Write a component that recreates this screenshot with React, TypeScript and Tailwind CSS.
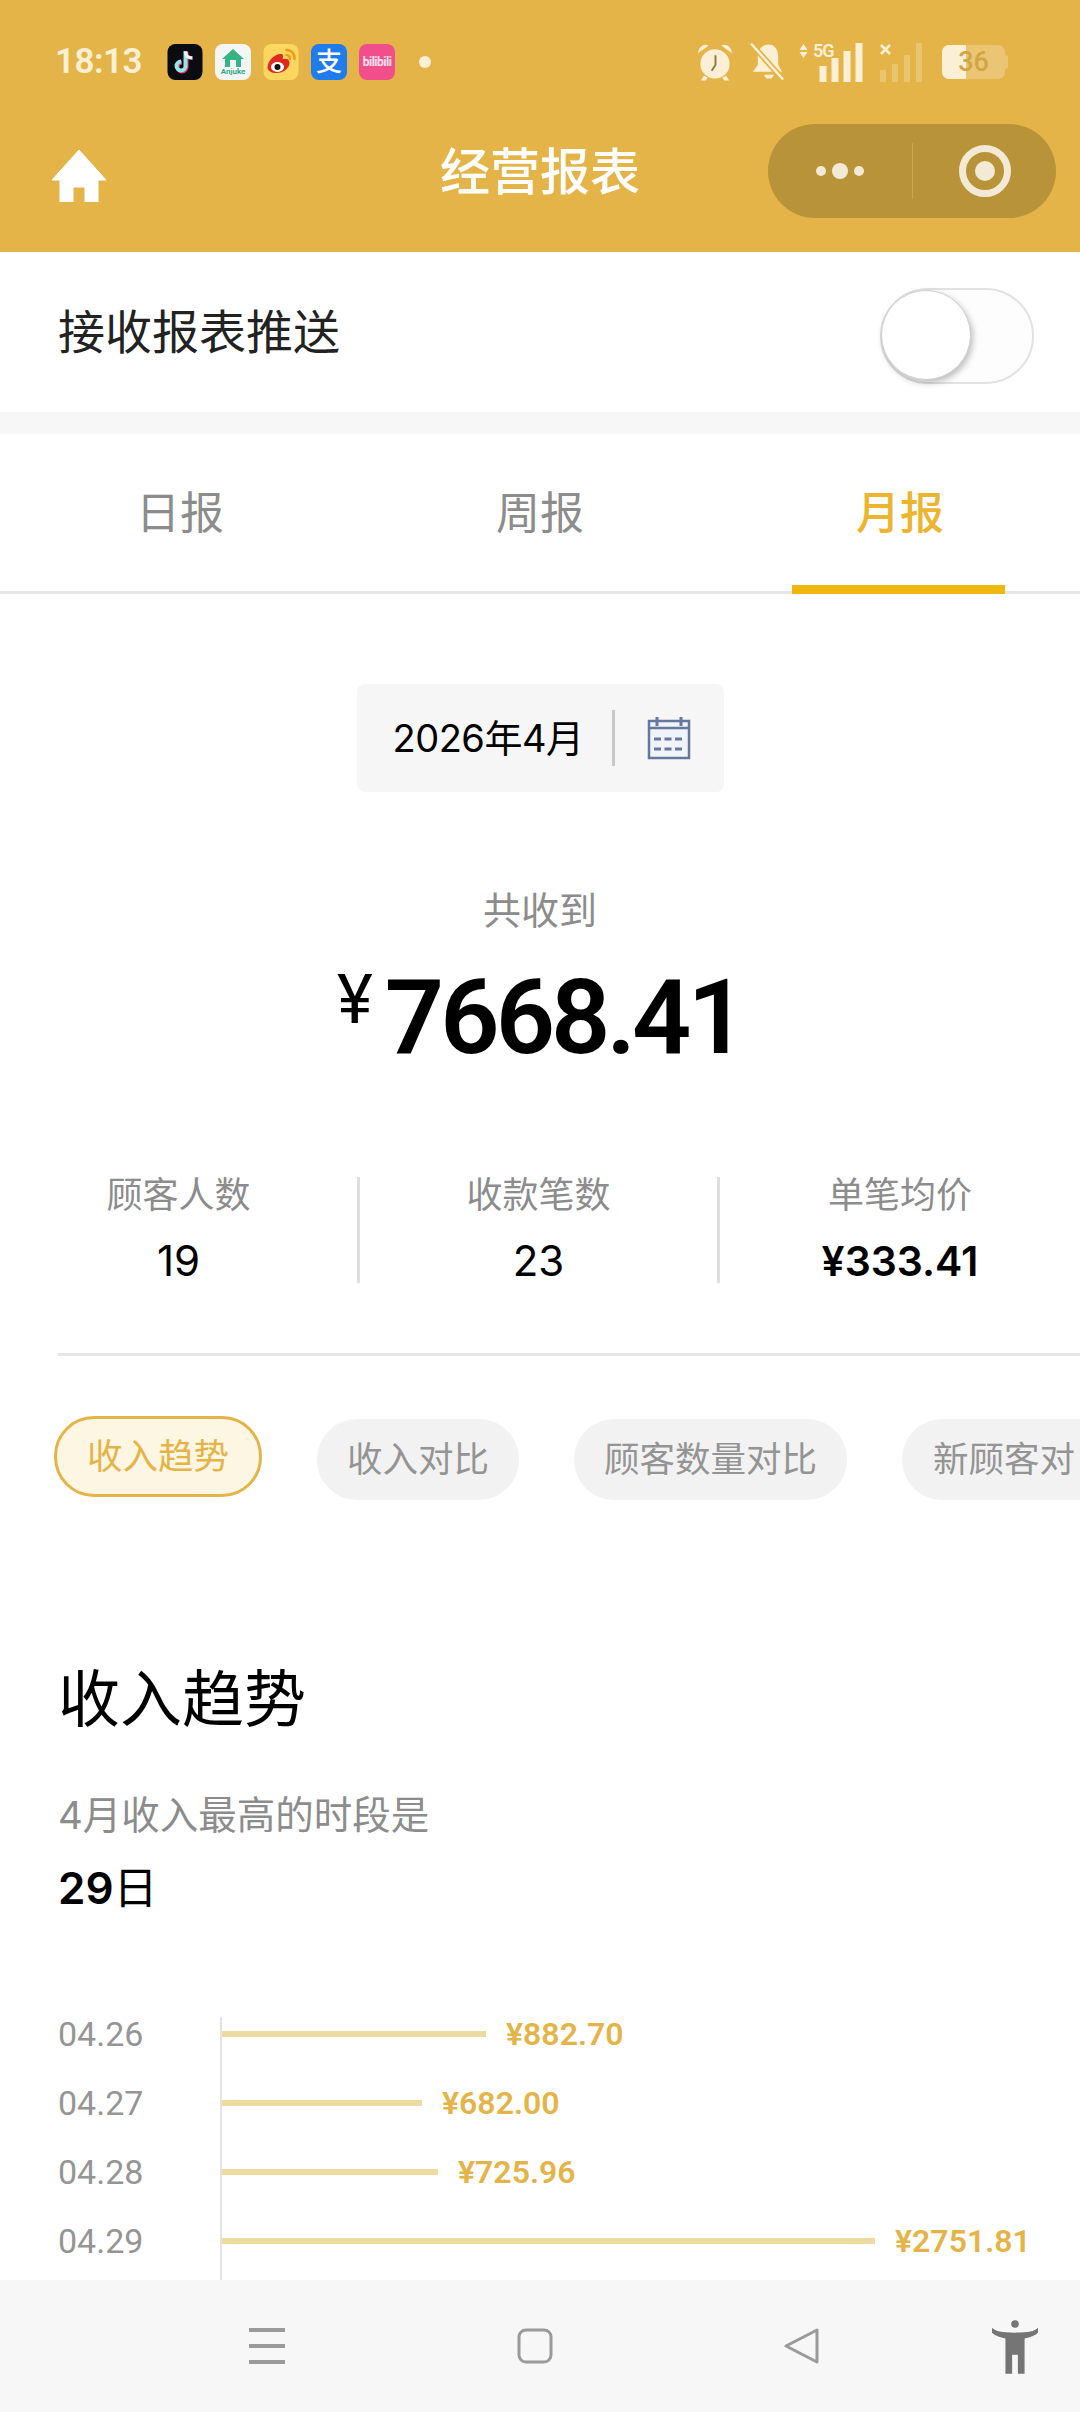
import React from 'react';

const cjk = '"Inter", "Noto Sans CJK SC", sans-serif';
const roboto = 'Roboto, "Noto Sans CJK SC", sans-serif';

function AppIcons() {
  return (
    <div className="flex items-center gap-[12px] ml-[25px]">
      <svg width="36" height="36" viewBox="0 0 35 36">
        <rect width="35" height="36" rx="8" fill="#0b0b12" />
        <path d="M19 8v15a4.5 4.5 0 1 1-4.5-4.5" fill="none" stroke="#ff2f5f" strokeWidth="4" />
        <path d="M18 7v15a4.5 4.5 0 1 1-4.5-4.5" fill="none" stroke="#8fe8ee" strokeWidth="4" />
        <path d="M18 8c0 4 3 6 7 6" fill="none" stroke="#f3f3f3" strokeWidth="3.5" />
      </svg>
      <div className="w-[36px] h-[36px] rounded-[8px] bg-[#f4f6f5] flex flex-col items-center pt-[5px]">
        <svg width="22" height="18" viewBox="0 0 22 18">
          <path d="M11 0 22 10h-3v8H3v-8H0z" fill="#35b583" />
          <path d="M8 11h6v7H8z" fill="#f4f6f5" />
        </svg>
        <span className="text-[8px] leading-[10px] font-semibold text-[#2aa678]" style={{ fontFamily: roboto }}>Anjuke</span>
      </div>
      <svg width="36" height="36" viewBox="0 0 35 36">
        <rect width="35" height="36" rx="8" fill="#fbd75f" />
        <path d="M4 23c0-6 7-13 13-13 3 0 3 2 2 5 4-1 7 0 7 4 0 5-6 10-13 10-5 0-9-2-9-6z" fill="#de2a1f" />
        <ellipse cx="14" cy="23" rx="6.5" ry="5" fill="#fff" />
        <circle cx="14" cy="23" r="3" fill="#111" />
        <path d="M23 6a8 8 0 0 1 8 9M23 11a3.500 3.500 0 0 1 3.500 4" fill="none" stroke="#ef9a1a" strokeWidth="2.500" strokeLinecap="round" />
      </svg>
      <div className="w-[36px] h-[36px] rounded-[8px] bg-[#1f7ced] flex items-center justify-center text-white text-[26px] leading-none font-medium">支</div>
      <div className="w-[36px] h-[36px] rounded-[8px] bg-[#f04f8b] flex items-center justify-center text-[#ffe3ee] text-[12px] font-bold tracking-[-0.5px]" style={{ fontFamily: roboto }}>bilibili</div>
      <div className="w-[12px] h-[12px] rounded-full bg-[#fbf0d6] ml-[12px]" />
    </div>
  );
}

function StatusIcons() {
  return (
    <div className="flex items-center text-[#fbf0d6]">
      <svg width="37" height="40" viewBox="0 0 38 40" fill="#fbf0d6">
        <circle cx="18.500" cy="22" r="15" />
        <path d="M1 11C2 4 7 1 12 3zM36 11C35 4 30 1 25 3z" />
        <path d="M7 34l-3 5h5l2-3zM30 34l3 5h-5l-2-3z" />
        <path d="M19 13v10l-4 6" fill="none" stroke="#8f7a3e" strokeWidth="2" />
      </svg>
      <svg className="ml-[16px]" width="35" height="40" viewBox="0 0 36 40" fill="#fbf0d6">
        <path d="M19 2c6 0 10 5 10 12v9l4 7H3l5-7v-9c0-7 5-12 11-12z" />
        <path d="M14 33h11l-3 4h-5z" />
        <path d="M1 1l33 37" stroke="#e4b448" strokeWidth="6" />
        <path d="M1 1l33 37" stroke="#fbf0d6" strokeWidth="2.500" />
      </svg>
      <div className="relative w-[67px] h-[40px] ml-[13px]">
        <svg width="67" height="40" viewBox="0 0 66 40" fill="#fbf0d6">
          <path d="M5 2 9 8H1zM5 16 1 10h8z" />
          <rect x="21" y="24" width="7" height="16" />
          <rect x="33" y="16" width="7" height="24" />
          <rect x="45" y="9" width="7" height="31" />
          <rect x="57" y="1" width="7" height="39" />
        </svg>
        <span className="absolute left-[15px] -top-[1px] text-[18px] leading-[20px] font-semibold tracking-[-1px]" style={{ fontFamily: roboto }}>5G</span>
      </div>
      <div className="relative w-[46px] h-[40px] ml-[14px]">
        <svg width="46" height="40" viewBox="0 0 46 40" fill="#fbf0d6" fillOpacity="0.28">
          <rect x="1" y="28" width="6" height="12" />
          <rect x="13" y="22" width="6" height="18" />
          <rect x="25" y="13" width="6" height="27" />
          <rect x="37" y="1" width="6" height="39" />
          <path d="M2 3l9 9M11 3l-9 9" stroke="#fbf0d6" strokeOpacity="1" strokeWidth="2.500" />
        </svg>
      </div>
      <div className="relative ml-[17px] w-[63px] h-[34px] rounded-[7px] bg-[#fbf0d6]/30 overflow-hidden">
        <div className="w-[24px] h-full bg-[#fbf0d6]" />
        <span className="absolute inset-0 flex items-center justify-center text-[#d2a544] text-[27px] font-medium" style={{ fontFamily: roboto }}>36</span>
      </div>
      <div className="w-[3px] h-[14px] bg-[#fbf0d6]/30 rounded-r-sm" />
    </div>
  );
}

function Header() {
  return (
    <header className="h-[252px] bg-[#e4b448] shrink-0">
      <div className="flex items-center justify-between h-[124px] pl-[55px] pr-[72px]">
        <div className="flex items-center">
          <span className="text-[35px] font-semibold text-[#fbf0d6] tracking-[-0.5px]" style={{ fontFamily: roboto }}>18:13</span>
          <AppIcons />
        </div>
        <StatusIcons />
      </div>
      <div className="relative flex items-center justify-center h-[94px]">
        <svg className="absolute left-[52px] top-[26px]" width="54" height="52" viewBox="0 0 54 52" fill="#fff">
          <path d="M27 0 54 30H46V52H33V37H21V52H8V30H0z" strokeLinejoin="round" stroke="#fff" strokeWidth="1" />
        </svg>
        <h1 className="text-[50px] font-medium text-white leading-none pt-[2px]">经营报表</h1>
        <div className="absolute right-[24px] top-0 w-[288px] h-[94px] rounded-full bg-[#b99339] flex items-center">
          <div className="w-[144px] flex items-center justify-center gap-[6px]">
            <div className="w-[10px] h-[10px] rounded-full bg-[#f3ead5]" />
            <div className="w-[16px] h-[16px] rounded-full bg-[#f3ead5]" />
            <div className="w-[10px] h-[10px] rounded-full bg-[#f3ead5]" />
          </div>
          <div className="w-px h-[56px] bg-[#c9a654]" />
          <div className="flex-1 flex items-center pl-[46px]">
            <div className="w-[52px] h-[52px] rounded-full border-[7px] border-[#f3ead5] flex items-center justify-center">
              <div className="w-[20px] h-[20px] rounded-full bg-[#f3ead5]" />
            </div>
          </div>
        </div>
      </div>
    </header>
  );
}

function Toggle() {
  return (
    <div className="relative w-[154px] h-[96px] mt-[8px] rounded-full border-2 border-[#e2e2e2] bg-[#fdfdfd]">
      <div className="absolute -left-[1px] top-0 w-[90px] h-[90px] rounded-full bg-white border border-[#d0d0d0] shadow-[2px_3px_6px_rgba(0,0,0,0.25)]" />
    </div>
  );
}

function Tabs() {
  return (
    <div className="grid grid-cols-3 h-[160px] mt-[22px] bg-white border-b-[3px] border-[#e6e6e6] text-[44px]">
      <div className="flex items-center justify-center text-[#8c8c8c]">日报</div>
      <div className="flex items-center justify-center text-[#8c8c8c]">周报</div>
      <div className="relative flex items-center justify-center text-[#ecb52f] font-medium">
        月报
        <div className="absolute left-[72px] -bottom-[3px] w-[213px] h-[9px] bg-[#efb810]" />
      </div>
    </div>
  );
}

function DateBox() {
  return (
    <div className="w-[367px] h-[108px] mx-auto mt-[90px] rounded-[8px] bg-[#f6f6f7] flex items-center pl-[36px]">
      <span className="text-[38px] text-black tracking-[-0.5px] w-[219px]">2026年4月</span>
      <div className="w-[3px] h-[56px] bg-[#c8c8c8]" />
      <svg className="ml-[32px]" width="44" height="44" viewBox="0 0 44 44" fill="none" stroke="#66779c">
        <rect x="2" y="5" width="40" height="37" fill="#f0f3fa" strokeWidth="2.500" />
        <path d="M2 12h40" strokeWidth="2.500" />
        <path d="M10 1v9M34 1v9" strokeWidth="3" />
        <path d="M7 23h30M7 33h30" strokeWidth="3" strokeDasharray="7 3.500" />
      </svg>
    </div>
  );
}

function Total() {
  return (
    <div className="text-center">
      <div className="mt-[91px] text-[38px] leading-[54px] text-[#8c8c8c]">共收到</div>
      <div className="mt-[26px] flex justify-center items-start h-[110px]" style={{ fontFamily: roboto }}>
        <span className="text-[68px] leading-[68px] text-black mt-[3px] mr-[12px]">¥</span>
        <span className="text-[104px] leading-[110px] font-semibold text-black tracking-[-4px]">7668.41</span>
      </div>
    </div>
  );
}

function Stat({ label, value, bold, last }: { label: string; value: string; bold?: boolean; last?: boolean }) {
  return (
    <div className={last ? 'h-[106px] text-center' : 'h-[106px] text-center border-r-[3px] border-[#dedede]'}>
      <div className="-mt-[6px] text-[36px] leading-[48px] text-[#8c8c8c]">{label}</div>
      <div className={bold ? 'mt-[18px] text-[41px] leading-[48px] font-semibold text-black' : 'mt-[18px] text-[42px] leading-[48px] text-black'}>{value}</div>
    </div>
  );
}

function Chip({ label, active, cut }: { label: string; active?: boolean; cut?: boolean }) {
  if (active) {
    return <div className="shrink-0 h-[81px] w-[208px] -mt-[3px] rounded-[40px] border-[3px] border-[#e4b448] bg-[#fdf6e3] flex items-center justify-center text-[35.500px] text-[#e4b448]">{label}</div>;
  }
  return <div className={cut ? 'shrink-0 h-[81px] w-[240px] rounded-[40px] bg-[#f2f2f2] flex items-center px-[31px] text-[35.500px] whitespace-nowrap text-[#949494]' : 'shrink-0 h-[81px] rounded-[40px] bg-[#f2f2f2] flex items-center px-[30px] text-[35.500px] whitespace-nowrap text-[#949494]'}>{label}</div>;
}

const rows = [
  { date: '04.26', value: '¥882.70', width: 264 },
  { date: '04.27', value: '¥682.00', width: 200 },
  { date: '04.28', value: '¥725.96', width: 216 },
  { date: '04.29', value: '¥2751.81', width: 653 },
];

function BarChart() {
  return (
    <div className="flex mt-[82px] pl-[58px]" style={{ fontFamily: roboto }}>
      <div className="w-[162px] pt-[1px]">
        {rows.map(r => (
          <div key={r.date} className="h-[69px] pt-[1px] flex items-center text-[34px] text-[#959595]">{r.date}</div>
        ))}
      </div>
      <div className="flex-1 h-[300px] mt-[19px] border-l-[2px] border-[#e2e2e2]">
        <div className="-mt-[18px]">
          {rows.map(r => (
            <div key={r.date} className="h-[69px] flex items-center">
              <div className="h-[6px] bg-[#eedba2]" style={{ width: r.width }} />
              <span className="ml-[20px] text-[32px] font-semibold text-[#e4b448]">{r.value}</span>
            </div>
          ))}
        </div>
      </div>
    </div>
  );
}

function BottomNav() {
  return (
    <nav className="h-[132px] shrink-0 bg-[#f7f7f7] relative flex items-start pt-[48px] pl-[249px]">
      <svg width="36" height="36" viewBox="0 0 36 36" stroke="#9a9a9a" strokeWidth="4">
        <path d="M0 2h36M0 18h36M0 34h36" />
      </svg>
      <svg className="ml-[232px]" width="36" height="36" viewBox="0 0 36 36" fill="none" stroke="#9a9a9a" strokeWidth="3">
        <rect x="2" y="2" width="32" height="32" rx="7" />
      </svg>
      <svg className="ml-[231px]" width="36" height="36" viewBox="0 0 36 36" fill="none" stroke="#9a9a9a" strokeWidth="3" strokeLinejoin="round">
        <path d="M33 2V34L2 18z" />
      </svg>
      <svg className="absolute right-[42px] top-[40px]" width="46" height="54" viewBox="0 0 48 56" fill="#757575">
        <circle cx="24" cy="4" r="4" />
        <path d="M0 8c4 4 10 5 24 5s20-1 24-5v5c-3 3-8 5-14 6v37h-7V36h-6v20h-7V19C8 18 3 16 0 13z" />
      </svg>
    </nav>
  );
}

export default function App() {
  return (
    <div className="w-[1080px] h-[2412px] flex flex-col bg-white overflow-hidden" style={{ fontFamily: cjk }}>
      <Header />
      <main className="flex-1 min-h-0 overflow-hidden bg-white">
        <div className="bg-[#f7f7f7]">
          <section className="h-[160px] bg-white flex items-center justify-between pl-[58px] pr-[46px]">
            <span className="text-[47px] text-[#222]">接收报表推送</span>
            <Toggle />
          </section>
          <Tabs />
        </div>
        <DateBox />
        <Total />
        <div className="grid grid-cols-3 mt-[104px]">
          <Stat label="顾客人数" value="19" />
          <Stat label="收款笔数" value="23" />
          <Stat label="单笔均价" value="¥333.41" bold last />
        </div>
        <div className="h-[3px] bg-[#e6e6e6] ml-[58px] mt-[70px]" />
        <div className="flex gap-[55px] pl-[54px] pt-[3px] mt-[60px] overflow-hidden">
          <Chip label="收入趋势" active />
          <Chip label="收入对比" />
          <Chip label="顾客数量对比" />
          <Chip label="新顾客对" cut />
        </div>
        <h2 className="pl-[58px] mt-[160px] text-[62px] leading-[80px] text-black">收入趋势</h2>
        <p className="pl-[58px] mt-[49px] text-[38.500px] leading-[52px] text-[#8c8c8c]">4月收入最高的时段是</p>
        <p className="pl-[58px] mt-[19px] text-[44px] leading-[56px] text-black"><span className="font-semibold">29</span>日</p>
        <BarChart />
      </main>
      <BottomNav />
    </div>
  );
}
